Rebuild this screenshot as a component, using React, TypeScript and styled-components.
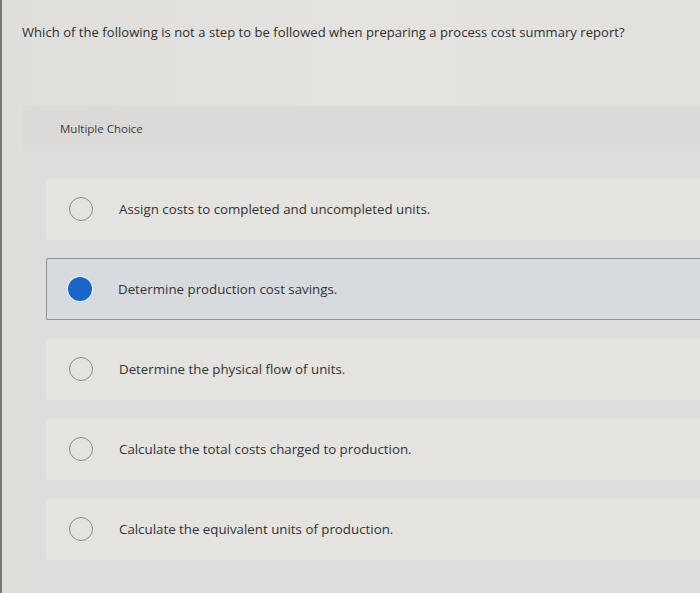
import React from "react";
import styled, { createGlobalStyle } from "styled-components";

const Global = createGlobalStyle`
  html, body { margin: 0; padding: 0; background: #e3e1de; }
  body { font-family: "Open Sans", "Liberation Sans", sans-serif; color: #333; }
`;

const Page = styled.div`
  min-height: 593px;
  border-left: 2px solid #77777a;
  background: linear-gradient(90deg, #e0dedb 0%, #e5e3e0 50%, #e3e1de 100%);
  box-sizing: border-box;
  overflow: hidden;
`;

const Question = styled.p`
  margin: 0;
  padding: 23px 0 0 20px;
  height: 106px;
  font-size: 13px;
  letter-spacing: 0.05px;
  color: #2e2e2e;
  box-sizing: border-box;
`;

const Panel = styled.section`
  margin-left: 21px;
  background: #dfdddb;
  padding-bottom: 34px;
`;

const PanelHeader = styled.div`
  height: 44px;
  display: flex;
  align-items: center;
  padding-left: 37px;
  font-size: 11.5px;
  color: #3a3a3a;
  background: #dcdad8;
`;

const List = styled.div`
  display: flex;
  flex-direction: column;
  gap: 18px;
  padding: 28px 0 0 23px;
`;

const Option = styled.label<{ $selected?: boolean }>`
  height: 62px;
  display: flex;
  align-items: center;
  box-sizing: border-box;
  padding-left: ${(p) => (p.$selected ? "21px" : "22px")};
  background: ${(p) => (p.$selected ? "#d7dbe0" : "#e4e3e0")};
  border: ${(p) => (p.$selected ? "1px solid #8d9097" : "1px solid transparent")};
  border-right: none;
  border-radius: 2px 0 0 2px;
`;

const Radio = styled.span<{ $selected?: boolean }>`
  width: 24px;
  height: 24px;
  border-radius: 50%;
  box-sizing: border-box;
  flex: none;
  border: ${(p) => (p.$selected ? "none" : "1.5px solid #8b8b8b")};
  background: ${(p) => (p.$selected ? "#1b66c9" : "transparent")};
  box-shadow: ${(p) => (p.$selected ? "0 0 0 1px #eef2f6" : "none")};
`;

const OptionText = styled.span`
  margin-left: 26px;
  font-size: 13.3px;
  color: #333;
`;

const options = [
  "Assign costs to completed and uncompleted units.",
  "Determine production cost savings.",
  "Determine the physical flow of units.",
  "Calculate the total costs charged to production.",
  "Calculate the equivalent units of production.",
];

export default function App() {
  return (
    <>
      <Global />
      <Page>
        <Question>
          Which of the following is not a step to be followed when preparing a process cost summary report?
        </Question>
        <Panel>
          <PanelHeader>Multiple Choice</PanelHeader>
          <List>
            {options.map((o, i) => (
              <Option key={o} $selected={i === 1}>
                <Radio $selected={i === 1} />
                <OptionText>{o}</OptionText>
              </Option>
            ))}
          </List>
        </Panel>
      </Page>
    </>
  );
}
